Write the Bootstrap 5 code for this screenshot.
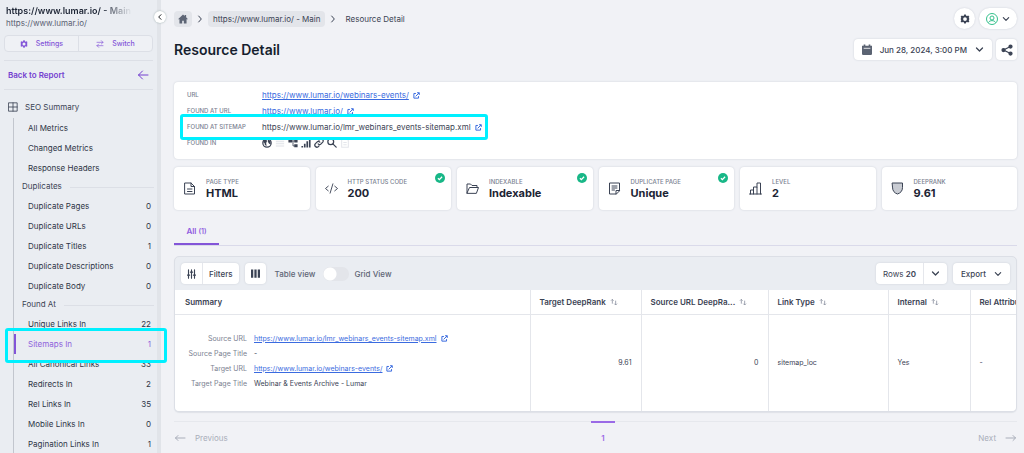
<!DOCTYPE html>
<html lang="en">
<head>
<meta charset="utf-8">
<meta name="viewport" content="width=device-width, initial-scale=1">
<title>Resource Detail</title>
<link href="https://cdn.jsdelivr.net/npm/bootstrap@5.3.0/dist/css/bootstrap.min.css" rel="stylesheet">
<style>
:root{--ink:#1c2434;--body:#3b4354;--muted:#7b8291;--violet:#8355d8;--line:#dcdfe6;--cyan:#00f0ff}
body{font-family:Inter,"Liberation Sans",sans-serif;font-size:8px;line-height:16px;color:var(--body);background:#f1f2f6}
svg{flex:none;display:block}
.ic{fill:none;stroke:currentColor;stroke-width:2;stroke-linecap:round;stroke-linejoin:round}
.bold{stroke-width:3}
button{font:inherit;color:inherit}
/* sidebar */
.side{width:161px;background:#eaedf2;border-right:4px solid #e1e4e9;flex:none}
.site{padding:5px 0 0 6px}
.site-name{font-size:9px;line-height:12px;font-weight:600;color:var(--ink);-webkit-mask-image:linear-gradient(90deg,#000 94px,transparent 126px)}
.site-url{line-height:12px;color:#5b6272}
.duo{margin-top:6px;border:1px solid var(--line);border-radius:4px;background:#eff1f5}
.duo button{height:15px;padding:0;flex:1 1 0;font-size:7px;line-height:15px;color:var(--violet);font-weight:500;background:none}
.duo button+button{border-left:1px solid var(--line)!important}
.back{height:30px;border-top:1px solid var(--line);border-bottom:1px solid var(--line);color:#7440d0;font-weight:600}
.seo{margin-top:9px;gap:7px}
.tree{border-left:1px solid #c2c6ce;margin:3px 0 0 13px}
.tree a{height:20px;padding:0 6px 0 14px;color:#2e3546}
.tree h2{height:18px;font-size:8px;margin:0;padding-left:8px;color:#3b4354;font-weight:400}
.tree h2::after{content:"";flex:1;border-top:1px solid var(--line);margin:0 3px 0 8px}
.tree .chosen{color:#8f62dc;box-shadow:inset 2px 0 #8355d8}
.spot::after{content:"";position:absolute;border:3px solid var(--cyan);border-radius:3px;pointer-events:none;z-index:3}
.tree .spot::after{inset:-6px -10px -9px -9px}
.fold{width:12px;height:12px;left:154px;top:11px;z-index:4;box-shadow:0 0 2px #9aa}
/* main */
.main{min-width:0;padding:0 7px 0 13px}
.crumb{height:16px;border-radius:4px;background:#e3e5ea;color:var(--body);padding:0 5px}
.box{background:#fff;border:0;border-radius:4px;box-shadow:0 0 2px #c9cdd6}
.gear,.account{height:21px}
.gear{width:21px}
.account{width:38px}
.heading{margin-top:10px}
.heading .box{height:21px}
.share{width:21px}
.title{font-size:14px;line-height:20px;font-weight:600;color:#161e2e}
.info{margin-top:22px;padding:5px 13px 8px}
.info dt{width:75px;font-weight:500;font-size:6px;color:var(--muted)}
.info dd{margin:0}
a.url{color:#3a6be0}
.found{gap:3px}
.info .spot::after{inset:-5px auto -5px -7px;width:308px}
.stats{gap:6px}
.stat{flex:1 1 0;height:43px;padding:0 9px;gap:10px}
.stat dt{font-size:6px;line-height:8px;font-weight:500;color:var(--muted)}
.stat dd{font-size:11px;line-height:14px;font-weight:700;color:var(--ink);margin:0}
.stat .ok{position:absolute;right:6px;top:6px}
.tabs{height:36px;border-bottom:1px solid #dadaea}
.tabs button{width:45px;height:26px;border:0;border-bottom:2px solid var(--violet);background:none;color:#8f5be0;font-weight:600;padding:0}
.tabs small{font-size:7px;font-weight:600}
.panel{margin-top:10px;border:1px solid var(--line);border-radius:5px;background:#eaedf2;overflow:hidden;box-shadow:0 1px 1px #dfe2e8}
.bar{height:33px;padding:0 6px;gap:6px}
.bar .box,.bar .box button{height:21px}
.bar button{padding:0 6px}
.bar .rows button{padding:0 7px}
.bar .split+.split{border-left:1px solid #e5e7ec!important}
.views{margin-left:3px;color:#5f6676;font-weight:500}
.form-switch .flip{width:26px;height:14px;margin:0 5px 0 8px;float:none;border:0;background:radial-gradient(circle at 7px 7px,#fff 6px,transparent 7px) #e3e5ea}
.grid{table-layout:fixed;margin:0;font-size:7px;background:#fff;width:100%}
.grid th,.grid td{padding:0 9px;border-left:1px solid #e4e6eb;overflow:hidden;white-space:nowrap}
.grid th:first-child,.grid td:first-child{border-left:0;padding-left:10px}
.grid th{height:24px;font-size:8px;font-weight:600;border-bottom:1px solid #e4e6eb}
.grid th svg{color:#8d93a1}
.grid td{height:97px;vertical-align:middle}
.grid td:first-child{padding-bottom:4px}
.grid dl{grid-template-columns:62px 1fr;column-gap:7px;line-height:15px;margin:0}
.grid dt{font-weight:400;color:var(--muted);text-align:right}
.grid dd{margin:0}
.pager{margin-top:9px;border-top:1px solid #e6e8ed}
.pager button{height:31px;color:#a9aeba;gap:9px}
.pager .now{width:24px;border-top:2px solid #9a6ae6!important;margin-top:-1px;color:#9a6ae6;font-weight:600}
</style>
</head>
<body>
<svg width="0" height="0" class="position-absolute" aria-hidden="true">
<symbol id="gear" viewBox="0 0 24 24"><path fill-rule="evenodd" d="M10 1h4l.8 3 2.2 1 2.7-1.500 2.800 2.800L21 9l.8 2 1.200 1-1.200 1-.8 2 1.500 2.700-2.800 2.800L17 19l-2.200 1-.8 3h-4l-.8-3L7 19l-2.700 1.500-2.800-2.800L3 15l-.8-2L1 12l1.200-1L3 9 1.500 6.300l2.800-2.800L7 5l2.200-1zM12 7.500a4.500 4.500 0 1 0 0 9 4.500 4.500 0 0 0 0-9z" fill="currentColor"/></symbol>
<symbol id="down" viewBox="0 0 24 24"><path d="M4 8l8 8 8-8" fill="none" stroke="currentColor" stroke-width="3.500" stroke-linecap="round" stroke-linejoin="round"/></symbol>
<symbol id="ext" viewBox="0 0 24 24"><path d="M10 5H3v16h16v-7M9 15L21 3M14 2.500h7.500V10" fill="none" stroke="#3a6be0" stroke-width="3.400"/></symbol>
<symbol id="sort" viewBox="0 0 24 24"><path d="M7 17V4M3 8l4-4 4 4M17 8v13M13 17l4 4 4-4" fill="none" stroke="currentColor" stroke-width="2.500"/></symbol>
<symbol id="tick" viewBox="0 0 24 24"><circle cx="12" cy="12" r="12" fill="#18b787"/><path d="M7 12.500l3.500 3.500L17 9" fill="none" stroke="#fff" stroke-width="3"/></symbol>
</svg>
<div class="d-flex vh-100 overflow-hidden position-relative">
<button class="fold btn p-0 bg-white rounded-circle position-absolute d-flex align-items-center justify-content-center border-0" aria-label="Collapse sidebar"><svg class="ic bold" width="8" height="8" viewBox="0 0 24 24"><path d="M15 5l-7 7 7 7"/></svg></button>
<nav class="side" aria-label="Report">
  <div class="site">
    <div class="site-name text-nowrap">https://www.lumar.io/ - Main</div>
    <div class="site-url">https://www.lumar.io/</div>
  </div>
  <div class="duo d-flex mx-1">
    <button class="border-0 d-flex align-items-center justify-content-center gap-2"><svg width="8" height="8"><use href="#gear"/></svg>Settings</button>
    <button class="border-0 d-flex align-items-center justify-content-center gap-2"><svg class="ic" width="8" height="8" viewBox="0 0 24 24"><path d="M3 7h18M16 2l5 5-5 5M21 17H3M8 12l-5 5 5 5"/></svg>Switch</button>
  </div>
  <a href="#" class="back d-flex align-items-center justify-content-between mx-1 mt-2 px-1 text-decoration-none">Back to Report<svg class="ic" width="12" height="12" viewBox="0 0 24 24"><path d="M22 12H3M11 4l-8 8 8 8"/></svg></a>
  <div class="seo d-flex align-items-center ps-2"><svg class="ic" width="10" height="10" viewBox="0 0 24 24"><path d="M2 2h20v20H2zM12 2v20M2 12h20"/></svg><span>SEO Summary</span></div>
  <div class="tree">
    <a href="#" class="d-flex align-items-center justify-content-between text-decoration-none">All Metrics</a>
    <a href="#" class="d-flex align-items-center justify-content-between text-decoration-none">Changed Metrics</a>
    <a href="#" class="d-flex align-items-center justify-content-between text-decoration-none">Response Headers</a>
    <h2 class="d-flex align-items-center">Duplicates</h2>
    <a href="#" class="d-flex align-items-center justify-content-between text-decoration-none">Duplicate Pages<span>0</span></a>
    <a href="#" class="d-flex align-items-center justify-content-between text-decoration-none">Duplicate URLs<span>0</span></a>
    <a href="#" class="d-flex align-items-center justify-content-between text-decoration-none">Duplicate Titles<span>1</span></a>
    <a href="#" class="d-flex align-items-center justify-content-between text-decoration-none">Duplicate Descriptions<span>0</span></a>
    <a href="#" class="d-flex align-items-center justify-content-between text-decoration-none">Duplicate Body<span>0</span></a>
    <h2 class="d-flex align-items-center">Found At</h2>
    <a href="#" class="d-flex align-items-center justify-content-between text-decoration-none">Unique Links In<span>22</span></a>
    <a href="#" class="chosen spot position-relative d-flex align-items-center justify-content-between text-decoration-none">Sitemaps In<span>1</span></a>
    <a href="#" class="d-flex align-items-center justify-content-between text-decoration-none">All Canonical Links<span>33</span></a>
    <a href="#" class="d-flex align-items-center justify-content-between text-decoration-none">Redirects In<span>2</span></a>
    <a href="#" class="d-flex align-items-center justify-content-between text-decoration-none">Rel Links In<span>35</span></a>
    <a href="#" class="d-flex align-items-center justify-content-between text-decoration-none">Mobile Links In<span>0</span></a>
    <a href="#" class="d-flex align-items-center justify-content-between text-decoration-none">Pagination Links In<span>1</span></a>
  </div>
</nav>
<main class="main flex-fill">
  <div class="d-flex align-items-center justify-content-between pt-2">
    <nav class="d-flex align-items-center gap-1" aria-label="Breadcrumb">
      <a href="#" class="crumb d-flex align-items-center px-1" aria-label="Home"><svg width="10" height="10" viewBox="0 0 24 24" fill="#5d6575"><path d="M12 1L0 12.500h3.500V23H10v-7h4v7h6.500V12.500H24L19.500 8V2.500H16v2.300z"/></svg></a>
      <svg class="ic bold" width="8" height="8" viewBox="0 0 24 24"><path d="M8 3l8 9-8 9"/></svg>
      <a href="#" class="crumb text-decoration-none">https://www.lumar.io/ - Main</a>
      <svg class="ic bold" width="8" height="8" viewBox="0 0 24 24"><path d="M8 3l8 9-8 9"/></svg>
      <span class="ms-1">Resource Detail</span>
    </nav>
    <div class="d-flex gap-1">
      <button class="box gear rounded-pill p-0 d-flex align-items-center justify-content-center" aria-label="Settings"><svg width="10" height="10"><use href="#gear"/></svg></button>
      <button class="box account rounded-pill d-flex align-items-center justify-content-center gap-1 p-0" aria-label="Account"><svg width="12" height="12" viewBox="0 0 24 24" fill="none" stroke="#35c08c" stroke-width="2"><circle cx="12" cy="12" r="11"/><circle cx="12" cy="10" r="4"/><path d="M5 19c2-5 12-5 14 0"/></svg><svg width="8" height="8"><use href="#down"/></svg></button>
    </div>
  </div>
  <div class="heading d-flex align-items-center justify-content-between">
    <h1 class="title m-0">Resource Detail</h1>
    <div class="d-flex gap-1">
      <button class="box d-flex align-items-center gap-2 px-2 fw-medium"><svg width="10" height="11" viewBox="0 0 24 26" fill="#5b6372"><path d="M4 1h4v3h8V1h4v3h4v20a2 2 0 0 1-2 2H2a2 2 0 0 1-2-2V4h4z"/><path d="M4 9h16v2H4z" fill="#fff"/></svg>Jun 28, 2024, 3:00 PM<svg width="9" height="9"><use href="#down"/></svg></button>
      <button class="box share p-0 d-flex align-items-center justify-content-center" aria-label="Share"><svg width="12" height="12" viewBox="0 0 24 24" fill="currentColor" stroke="currentColor" stroke-width="2.500"><path d="M19 5L5 12l14 7" fill="none"/><circle cx="19" cy="5" r="3"/><circle cx="5" cy="12" r="3"/><circle cx="19" cy="19" r="3"/></svg></button>
    </div>
  </div>
  <dl class="box info mb-2">
    <div class="d-flex"><dt>URL</dt><dd class="d-flex align-items-center gap-1"><a class="url" href="#">https://www.lumar.io/webinars-events/</a><svg width="7" height="7"><use href="#ext"/></svg></dd></div>
    <div class="d-flex"><dt>FOUND AT URL</dt><dd class="d-flex align-items-center gap-1"><a class="url" href="#">https://www.lumar.io/</a><svg width="7" height="7"><use href="#ext"/></svg></dd></div>
    <div class="d-flex spot position-relative"><dt>FOUND AT SITEMAP</dt><dd class="d-flex align-items-center gap-1">https://www.lumar.io/lmr_webinars_events-sitemap.xml<svg width="7" height="7"><use href="#ext"/></svg></dd></div>
    <div class="d-flex"><dt>FOUND IN</dt><dd class="d-flex align-items-center found">
      <svg width="10" height="10" viewBox="0 0 24 24"><circle cx="12" cy="12" r="10" fill="none" stroke="currentColor" stroke-width="3"/><path d="M4 5l7-1 1 4-2 4 1 7-4-2-1-5-3-2zM14 3l6 4 1 8-4-1-3-5z" fill="currentColor"/></svg>
      <svg width="10" height="10" viewBox="0 0 24 24" stroke="#e0e2e8" stroke-width="2.500"><path d="M2 4h20M2 9h20M2 14h20M2 19h20"/></svg>
      <svg width="10" height="10" viewBox="0 0 24 24"><path d="M1 3h9v8H1zM15 4h8v7h-8zM15 15h8v7h-8z" fill="currentColor"/><path d="M9 7h7M12 7v12h4" fill="none" stroke="currentColor" stroke-width="2"/></svg>
      <svg width="10" height="10" viewBox="0 0 24 24" fill="currentColor"><path d="M1 19h4v4H1zM7 14h4v9H7zM13 8h4v15h-4zM19 1h4v22h-4z"/></svg>
      <svg class="ic bold" width="10" height="10" viewBox="0 0 24 24"><path d="M10 14a5 5 0 0 0 7 0l4-4a5 5 0 0 0-7-7l-2 2M14 10a5 5 0 0 0-7 0l-4 4a5 5 0 0 0 7 7l2-2"/></svg>
      <svg class="ic bold" width="10" height="10" viewBox="0 0 24 24"><circle cx="9" cy="9" r="7"/><path d="M14 14l8 8"/></svg>
      <svg width="10" height="10" viewBox="0 0 24 24" fill="none" stroke="#e4e6eb" stroke-width="2.500"><path d="M4 2h12l4 4v16H4zM8 11h8M8 16h8"/></svg>
    </dd></div>
  </dl>
  <div class="d-flex stats">
    <dl class="box stat d-flex align-items-center m-0 position-relative"><svg class="ic" width="13" height="13" viewBox="0 0 24 26"><path d="M3 2h12l7 7v15H3zM15 2v7h7M8 14h9M8 19h9"/></svg><div><dt>PAGE TYPE</dt><dd>HTML</dd></div></dl>
    <dl class="box stat d-flex align-items-center m-0 position-relative"><svg class="ic" width="13" height="13" viewBox="0 0 28 26"><path d="M7 8l-6 5 6 5M21 8l6 5-6 5M17 3l-6 20"/></svg><div><dt>HTTP STATUS CODE</dt><dd>200</dd></div><svg class="ok" width="10" height="10"><use href="#tick"/></svg></dl>
    <dl class="box stat d-flex align-items-center m-0 position-relative"><svg class="ic" width="13" height="13" viewBox="0 0 26 26"><path d="M2 22V4h7l3 3h10v4M2 22l5-11h18l-4 11z"/></svg><div><dt>INDEXABLE</dt><dd>Indexable</dd></div><svg class="ok" width="10" height="10"><use href="#tick"/></svg></dl>
    <dl class="box stat d-flex align-items-center m-0 position-relative"><svg class="ic" width="13" height="13" viewBox="0 0 24 26"><path d="M15 24H2V2h20v15zM15 24v-7h7M7 8h10M7 12h10M7 16h5"/></svg><div><dt>DUPLICATE PAGE</dt><dd>Unique</dd></div><svg class="ok" width="10" height="10"><use href="#tick"/></svg></dl>
    <dl class="box stat d-flex align-items-center m-0 position-relative"><svg class="ic" width="13" height="13" viewBox="0 0 26 26"><path d="M1 24h24M3 24v-8h6v8M9 16v-6h7v14M16 10V2h7v22"/></svg><div><dt>LEVEL</dt><dd>2</dd></div></dl>
    <dl class="box stat d-flex align-items-center m-0 position-relative"><svg class="ic" width="13" height="13" viewBox="0 0 26 26"><path d="M3 2h20v9c0 7-4 11-10 13C7 22 3 18 3 11z" fill="#c9ccd3"/></svg><div><dt>DEEPRANK</dt><dd>9.61</dd></div></dl>
  </div>
  <div class="tabs d-flex align-items-end" role="tablist"><button role="tab" aria-selected="true">All <small>(1)</small></button></div>
  <section class="panel">
    <div class="bar d-flex align-items-center">
      <div class="box d-flex">
        <button class="split border-0 bg-transparent" aria-label="Filter options"><svg class="ic bold" width="9" height="10" viewBox="0 0 24 24"><path d="M4 1v22M12 1v22M20 1v22M1 15h6M9 7h6M17 15h6"/></svg></button>
        <button class="split border-0 bg-transparent fw-medium">Filters</button>
      </div>
      <button class="box d-flex align-items-center" aria-label="Columns"><svg width="9" height="9" viewBox="0 0 24 24" fill="currentColor"><path d="M0 1h6v22H0zM9 1h6v22H9zM18 1h6v22h-6z"/></svg></button>
      <div class="views form-switch d-flex align-items-center p-0">
        <label for="view">Table view</label>
        <input class="form-check-input flip shadow-none" type="checkbox" role="switch" id="view">
        <label for="view">Grid View</label>
      </div>
      <div class="box rows d-flex ms-auto">
        <button class="split border-0 bg-transparent">Rows <b class="fw-semibold">20</b></button>
        <button class="split border-0 bg-transparent" aria-label="Rows per page"><svg width="9" height="9"><use href="#down"/></svg></button>
      </div>
      <button class="box fw-medium d-flex align-items-center gap-2 px-2">Export<svg width="8" height="8"><use href="#down"/></svg></button>
    </div>
    <table class="grid">
      <colgroup><col><col style="width:111px"><col style="width:127px"><col style="width:120px"><col style="width:82px"><col style="width:46px"></colgroup>
      <thead><tr><th>Summary</th><th><span class="d-flex align-items-center gap-1">Target DeepRank<svg width="8" height="8"><use href="#sort"/></svg></span></th><th><span class="d-flex align-items-center gap-1">Source URL DeepRa...<svg width="8" height="8"><use href="#sort"/></svg></span></th><th><span class="d-flex align-items-center gap-1">Link Type<svg width="8" height="8"><use href="#sort"/></svg></span></th><th><span class="d-flex align-items-center gap-1">Internal<svg width="8" height="8"><use href="#sort"/></svg></span></th><th class="pe-0">Rel Attribu</th></tr></thead>
      <tbody><tr>
        <td><dl class="d-grid">
          <dt>Source URL</dt><dd class="d-flex align-items-center gap-1"><a class="url" href="#">https://www.lumar.io/lmr_webinars_events-sitemap.xml</a><svg width="7" height="7"><use href="#ext"/></svg></dd>
          <dt>Source Page Title</dt><dd>-</dd>
          <dt>Target URL</dt><dd class="d-flex align-items-center gap-1"><a class="url" href="#">https://www.lumar.io/webinars-events/</a><svg width="7" height="7"><use href="#ext"/></svg></dd>
          <dt>Target Page Title</dt><dd>Webinar &amp; Events Archive - Lumar</dd>
        </dl></td>
        <td class="text-end">9.61</td><td class="text-end">0</td><td>sitemap_loc</td><td>Yes</td><td>-</td>
      </tr></tbody>
    </table>
  </section>
  <nav class="pager d-flex justify-content-between" aria-label="Pages">
    <button class="border-0 bg-transparent p-0 d-flex align-items-center"><svg class="ic" width="12" height="12" viewBox="0 0 24 24"><path d="M22 12H3M8 7l-5 5 5 5"/></svg>Previous</button>
    <button class="now border-0 bg-transparent p-0 d-block">1</button>
    <button class="border-0 bg-transparent p-0 d-flex align-items-center">Next<svg class="ic" width="12" height="12" viewBox="0 0 24 24"><path d="M2 12h19M16 7l5 5-5 5"/></svg></button>
  </nav>
</main>
</div>
<script src="https://cdn.jsdelivr.net/npm/bootstrap@5.3.0/dist/js/bootstrap.bundle.min.js"></script>
</body>
</html>
